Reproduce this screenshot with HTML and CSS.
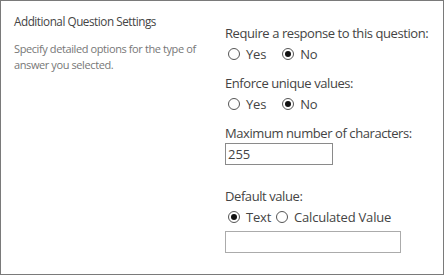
FILE: index.html
```html
<!DOCTYPE html>
<html>
<head>
<meta charset="utf-8">
<link rel="stylesheet" href="styles.css">
</head>
<body>
<div class="panel">
  <div class="info">
    <h3 class="title">Additional Question Settings</h3>
    <p class="desc">Specify detailed options for the type of answer you selected.</p>
  </div>
  <div class="fields">
    <div class="field">
      <div class="label">Require a response to this question:</div>
      <div class="radios">
        <span class="opt"><span class="radio"></span>Yes</span>
        <span class="opt"><span class="radio checked"></span>No</span>
      </div>
    </div>
    <div class="field">
      <div class="label">Enforce unique values:</div>
      <div class="radios">
        <span class="opt"><span class="radio"></span>Yes</span>
        <span class="opt"><span class="radio checked"></span>No</span>
      </div>
    </div>
    <div class="field">
      <div class="label">Maximum number of characters:</div>
      <div class="input short">255</div>
    </div>
    <div class="field default">
      <div class="label">Default value:</div>
      <div class="radios tight">
        <span class="opt"><span class="radio checked"></span>Text</span>
        <span class="opt"><span class="radio"></span>Calculated Value</span>
      </div>
      <div class="input long"></div>
    </div>
  </div>
</div>
</body>
</html>
```
FILE: styles.css
```css
html, body {
  margin: 0;
  padding: 0;
  background: #fff;
}
body {
  font-family: "Open Sans", "Noto Sans", sans-serif;
  color: #444;
}
.panel {
  box-sizing: border-box;
  width: 444px;
  height: 275px;
  border: 1px solid #7a7a7a;
  display: flex;
}
.info {
  width: 210px;
  padding: 12px 0 0 13px;
  box-sizing: border-box;
}
.title {
  margin: 0;
  font-size: 11.7px;
  font-weight: normal;
  color: #444;
  line-height: 16px;
  letter-spacing: -0.45px;
}
.desc {
  margin: 12px 0 0;
  font-size: 11px;
  line-height: 16px;
  color: #777;
  width: 190px;
  letter-spacing: -0.4px;
}
.fields {
  padding: 23px 0 0 14px;
  flex: 1;
}
.label {
  font-size: 13px;
  line-height: 18px;
  color: #444;
  letter-spacing: -0.42px;
}
.field {
  margin-bottom: 10px;
}
.radios {
  display: flex;
  gap: 16px;
  padding-left: 3px;
  margin-top: 2px;
  height: 20px;
  align-items: center;
}
.radios.tight {
  gap: 5px;
}
.opt {
  display: flex;
  align-items: center;
  gap: 6px;
  font-size: 13px;
  color: #444;
  letter-spacing: -0.2px;
}
.radio {
  box-sizing: border-box;
  width: 12px;
  height: 12px;
  border: 1px solid #555;
  border-radius: 50%;
  display: flex;
  align-items: center;
  justify-content: center;
}
.radio.checked::after {
  content: "";
  width: 6px;
  height: 6px;
  border-radius: 50%;
  background: #111;
}
.input {
  box-sizing: border-box;
  height: 22px;
  border: 1px solid #8a8a8a;
  font-size: 13px;
  line-height: 20px;
  padding-left: 2px;
  color: #444;
  margin-top: 1px;
}
.input.short {
  width: 108px;
}
.input.long {
  width: 176px;
  border-color: #ababab;
  margin-top: 4px;
}
.field.default {
  margin-top: 22px;
}
```
